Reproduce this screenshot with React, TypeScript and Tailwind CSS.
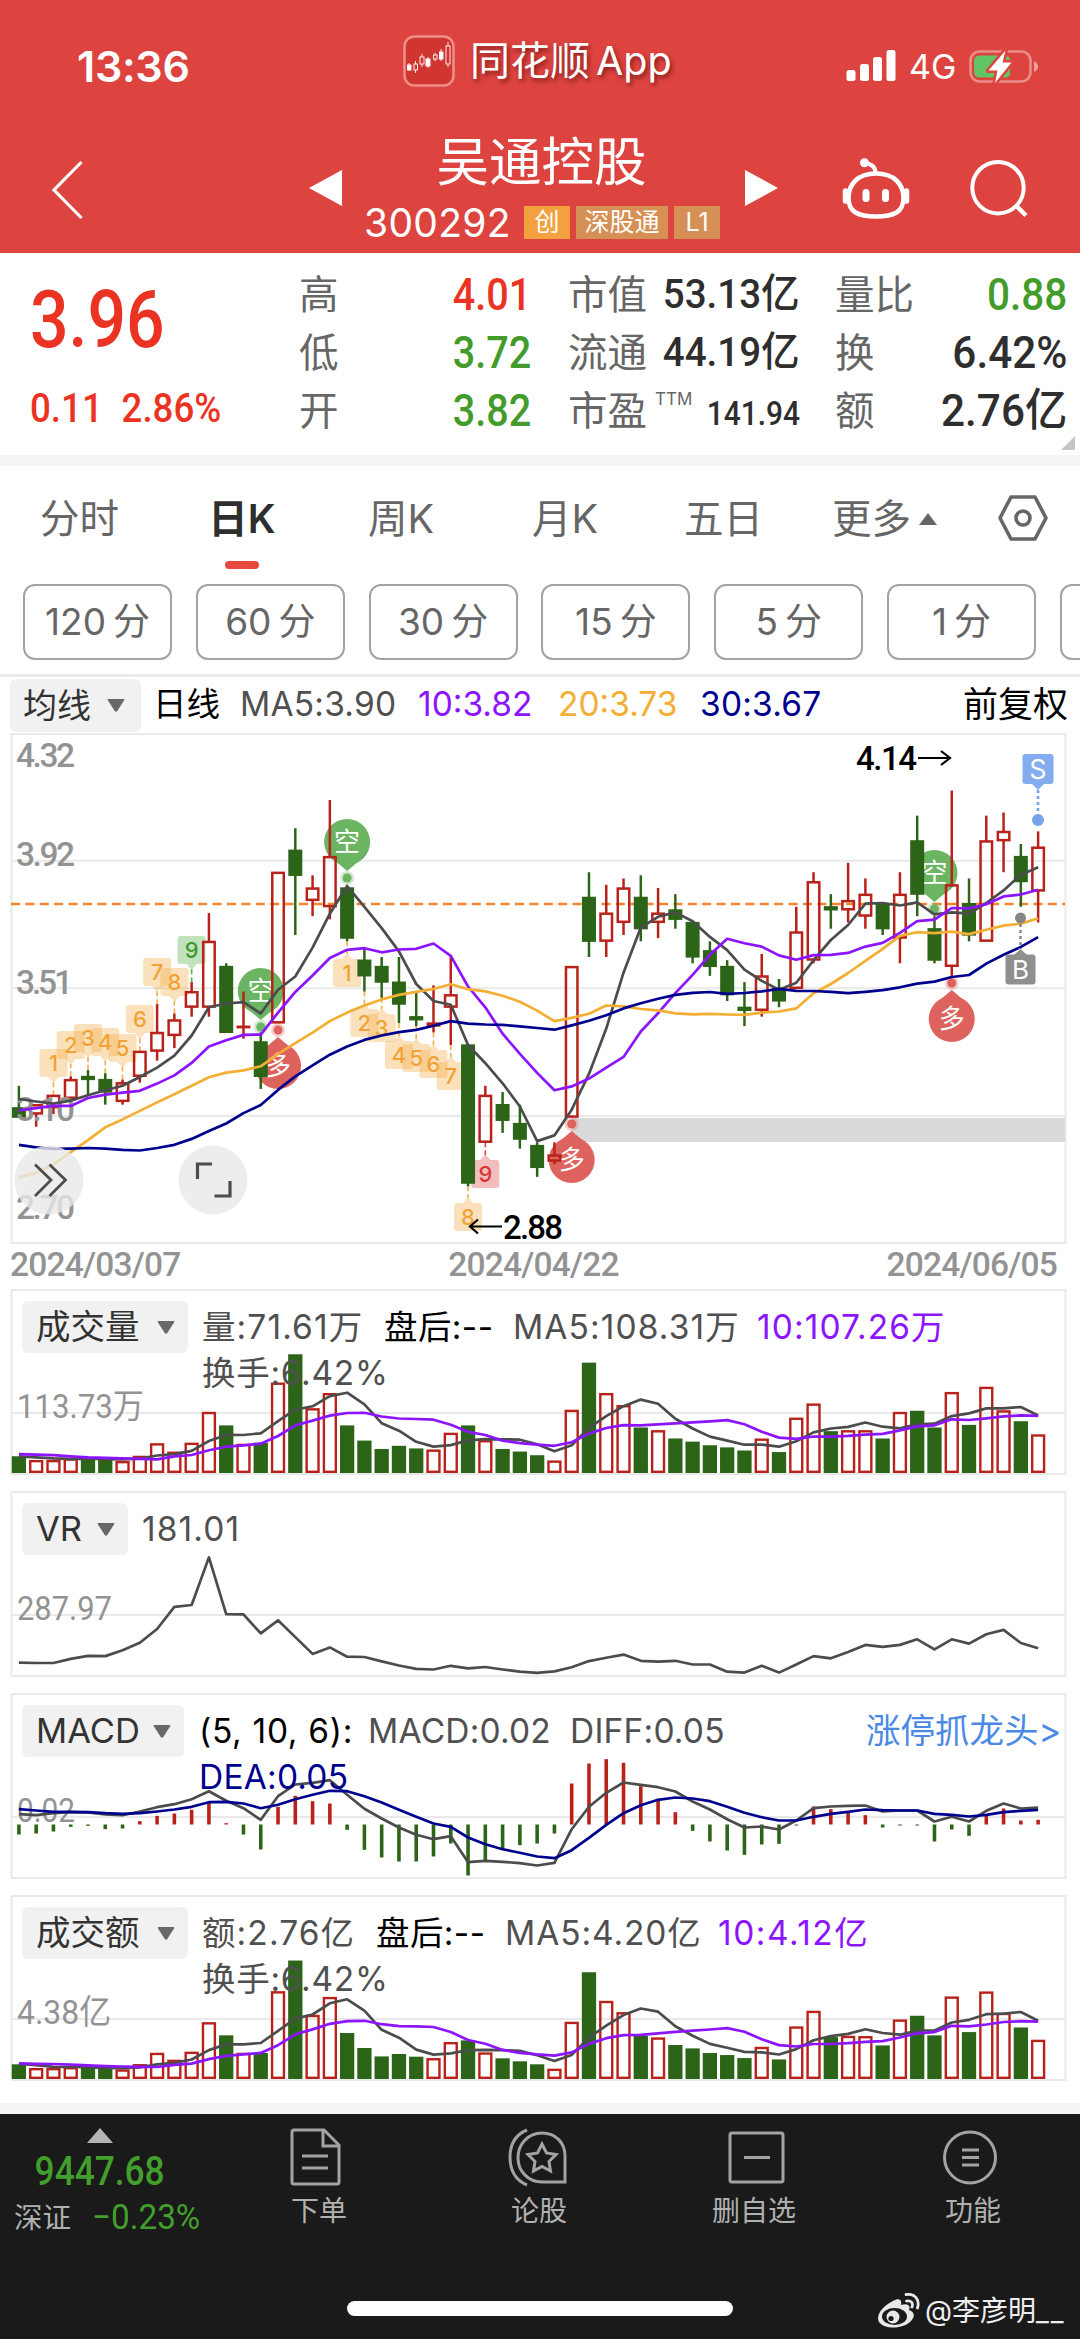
import type { ReactNode } from 'react';
import clsx from 'clsx';

// [open, close, high, low]
const candles = [
  [3.13, 3.10, 3.20, 3.10], [3.11, 3.14, 3.14, 3.07], [3.13, 3.17, 3.17, 3.11], [3.16, 3.22, 3.23, 3.16],
  [3.23, 3.22, 3.25, 3.17], [3.22, 3.18, 3.24, 3.14], [3.15, 3.21, 3.22, 3.14], [3.23, 3.31, 3.31, 3.21],
  [3.31, 3.37, 3.46, 3.28], [3.36, 3.41, 3.43, 3.32], [3.45, 3.50, 3.53, 3.42], [3.45, 3.66, 3.75, 3.42],
  [3.58, 3.37, 3.59, 3.37], [3.39, 3.39, 3.50, 3.35], [3.34, 3.23, 3.37, 3.19], [3.40, 3.88, 3.88, 3.40],
  [3.95, 3.87, 4.02, 3.68], [3.79, 3.83, 3.87, 3.74], [3.77, 3.93, 4.11, 3.73], [3.83, 3.67, 3.83, 3.66],
  [3.60, 3.55, 3.64, 3.50], [3.58, 3.53, 3.61, 3.48], [3.53, 3.46, 3.61, 3.40], [3.42, 3.41, 3.50, 3.39],
  [3.39, 3.40, 3.52, 3.37], [3.45, 3.49, 3.61, 3.33], [3.33, 2.89, 3.33, 2.88], [3.02, 3.17, 3.20, 3.02],
  [3.14, 3.09, 3.18, 3.05], [3.08, 3.03, 3.14, 3.00], [3.01, 2.94, 3.02, 2.91], [2.96, 2.98, 3.02, 2.95],
  [3.10, 3.58, 3.58, 3.10], [3.80, 3.66, 3.88, 3.61], [3.66, 3.75, 3.84, 3.61], [3.72, 3.83, 3.86, 3.68],
  [3.80, 3.70, 3.87, 3.66], [3.72, 3.75, 3.83, 3.67], [3.76, 3.73, 3.81, 3.70], [3.72, 3.61, 3.72, 3.59],
  [3.63, 3.58, 3.66, 3.55], [3.58, 3.49, 3.60, 3.47], [3.45, 3.44, 3.53, 3.39], [3.44, 3.55, 3.62, 3.42],
  [3.51, 3.47, 3.54, 3.45], [3.51, 3.69, 3.77, 3.51], [3.60, 3.85, 3.88, 3.59], [3.77, 3.76, 3.81, 3.70],
  [3.76, 3.79, 3.91, 3.72], [3.74, 3.81, 3.86, 3.70], [3.78, 3.70, 3.78, 3.68], [3.67, 3.81, 3.88, 3.59],
  [3.98, 3.81, 4.06, 3.74], [3.70, 3.60, 3.74, 3.59], [3.58, 3.84, 4.14, 3.55], [3.78, 3.68, 3.86, 3.66],
  [3.66, 3.98, 4.06, 3.66], [3.98, 4.01, 4.07, 3.88], [3.93, 3.85, 3.97, 3.77], [3.82, 3.96, 4.01, 3.72],
];

const volumes = [
  32, 25, 25, 28, 27, 27, 23, 33, 57, 41, 58, 117, 91, 56, 58, 173, 227, 124, 153, 91,
  62, 46, 52, 47, 45, 77, 91, 63, 46, 41, 34, 24, 121, 211, 153, 130, 87, 82, 66, 60,
  53, 49, 43, 66, 40, 106, 133, 80, 82, 82, 66, 117, 119, 87, 155, 92, 165, 120, 99, 74,
];

const amounts = [
  1.08, 0.81, 0.81, 0.88, 0.81, 0.81, 0.71, 1.10, 1.93, 1.42, 2.01, 4.18, 3.21, 1.93, 1.91, 6.46, 8.71, 4.72, 6.04, 3.38,
  2.28, 1.66, 1.84, 1.64, 1.54, 2.72, 2.84, 1.96, 1.52, 1.30, 1.08, 0.76, 4.21, 7.85, 5.75, 4.92, 3.18, 3.06, 2.50, 2.25,
  1.91, 1.76, 1.54, 2.37, 1.44, 3.87, 5.02, 3.08, 3.18, 3.16, 2.47, 4.38, 4.65, 3.21, 6.07, 3.45, 6.44, 4.87, 3.79, 2.89,
];

const vr = [
  135, 134, 134, 147, 157, 156, 175, 199, 243, 314, 320, 473, 291, 290, 229, 271, 217, 163, 184, 154,
  153, 139, 126, 115, 113, 125, 117, 121, 113, 106, 102, 107, 120, 140, 151, 161, 141, 138, 141, 129,
  129, 106, 103, 125, 103, 129, 156, 149, 169, 192, 186, 192, 210, 178, 210, 196, 226, 240, 198, 181,
];

// thousandths
const macd = [
  -30, -27, -21, -7, -4, -14, -12, 10, 26, 33, 44, 68, 4, -30, -75, 53, 86, 70, 63, -16,
  -76, -99, -111, -111, -96, -57, -153, -107, -76, -62, -57, -27, 123, 183, 196, 185, 115, 77, 37, -19,
  -51, -78, -91, -60, -58, -3, 54, 46, 35, 28, -9, -3, -3, -51, -15, -34, 30, 48, 12, 14,
];
const diff = [
  31, 28, 34, 37, 36, 30, 28, 39, 52, 61, 76, 100, 71, 49, 14, 85, 120, 125, 133, 89,
  47, 18, -9, -31, -44, -35, -113, -109, -112, -116, -123, -115, -14, 53, 95, 126, 119, 112, 99, 69,
  45, 16, -9, -6, -15, 12, 49, 54, 56, 57, 39, 42, 42, 9, 23, 9, 41, 63, 48, 51,
];
const dea = [
  46, 42, 38, 38, 37, 34, 32, 34, 39, 45, 53, 67, 68, 63, 49, 59, 76, 89, 101, 100,
  85, 66, 44, 23, 3, -7, -39, -59, -74, -85, -96, -101, -77, -40, -1, 34, 58, 74, 81, 78,
  70, 53, 35, 22, 12, 12, 23, 32, 38, 45, 43, 42, 42, 32, 29, 24, 29, 37, 41, 44,
];

const RED = '#b8221a';
const GREEN = '#2c6518';
const GRAY = '#4c4c4c';
const PURPLE = '#8c14ff';
const ORANGE = '#f3ae34';
const NAVY = '#00008f';
const GRID = '#e9e9e9';

const FONT = "font-[Inter,'Noto_Sans_CJK_SC',sans-serif]";
const DIN = "font-[Roboto,'Noto_Sans_CJK_SC',sans-serif]";

const cx = (i: number) => 18.9 + i * 17.275;
const isUp = (i: number) => candles[i][1] >= candles[i][0];

// The first values come from bars that lie before the visible window
function average(values: number[], n: number, lead: number[]) {
  return values.map((_, i) =>
    i < lead.length ? lead[i] : values.slice(i - n + 1, i + 1).reduce((a, b) => a + b, 0) / n
  );
}

const closes = candles.map((c) => c[1]);
const ma5 = average(closes, 5, [3.158, 3.15, 3.143, 3.153]);
const ma10 = average(closes, 10, [3.122, 3.129, 3.136, 3.136, 3.161, 3.172, 3.178, 3.184, 3.207]);
const ma20 = average(closes, 20, [
  2.909, 2.923, 2.95, 2.989, 3.027, 3.068, 3.093, 3.12, 3.147, 3.173, 3.2, 3.227, 3.242, 3.249, 3.262, 3.302, 3.336, 3.369, 3.406,
]);
const ma30 = average(closes, 30, [
  3.012, 3.004, 2.999, 3.0, 3.002, 3.0, 2.996, 2.994, 3.002, 3.012, 3.031, 3.056, 3.08, 3.113, 3.139, 3.187, 3.23, 3.265,
  3.299, 3.325, 3.346, 3.36, 3.371, 3.378, 3.391, 3.406, 3.398, 3.395, 3.394,
]);

function Line({ values, y, color }: { values: number[]; y: (v: number) => number; color: string }) {
  return (
    <polyline
      points={values.map((v, i) => `${cx(i)},${y(v).toFixed(1)}`).join(' ')}
      fill="none"
      stroke={color}
      strokeWidth={2.7}
      strokeLinejoin="round"
    />
  );
}

const priceY = (p: number) => 2 + (4.32 - p) * 314.1;

// [bar index, label, top of the box]
const tagsAbove: [number, string, number][] = [
  [2, '1', 317], [3, '2', 299], [4, '3', 292], [5, '4', 296], [6, '5', 302], [7, '6', 273], [8, '7', 226], [9, '8', 236], [10, '9', 204],
];
const tagsBelow: [number, string, number][] = [
  [19, '1', 227], [20, '2', 277], [21, '3', 282], [22, '4', 309], [23, '5', 312], [24, '6', 318], [25, '7', 330], [27, '9', 428], [26, '8', 471],
];

function CountTag({ i, label, top, below }: { i: number; label: string; top: number; below?: boolean }) {
  const x = cx(i);
  const nine = label === '9';
  const fill = !nine ? '#f3ad45' : below ? '#dd4a4a' : '#56b04c';
  const text = !nine ? '#f2a235' : below ? '#dc3535' : '#3b9a2b';
  const pointer = below
    ? `M${x - 5} ${top} L${x} ${top - 6} L${x + 5} ${top}Z`
    : `M${x - 5} ${top + 28} L${x} ${top + 34} L${x + 5} ${top + 28}Z`;
  return (
    <g>
      <g fill={fill} opacity={0.36}>
        <rect x={x - 14} y={top} width={28} height={28} rx={3} />
        <path d={pointer} />
      </g>
      <line
        x1={x}
        x2={x}
        y1={below ? priceY(candles[i][3]) : priceY(candles[i][2])}
        y2={below ? top - 5 : top + 33}
        stroke={fill}
        strokeWidth={1.6}
        strokeDasharray="5 3"
      />
      <text x={x} y={top + 22} textAnchor="middle" fontSize={22} fontWeight={500} fill={text}>{label}</text>
    </g>
  );
}

function Balloon({ i, y, long }: { i: number; y: number; long?: boolean }) {
  const x = cx(i);
  const s = long ? -1 : 1;
  const fill = long ? '#de625d' : '#6bb462';
  return (
    <g>
      <circle cx={x} cy={y + s * 36} r={7} fill={fill} opacity={0.3} />
      <circle cx={x} cy={y + s * 36} r={4.5} fill={fill} />
      <circle cx={x} cy={y} r={23} fill={fill} />
      <path d={`M${x - 13} ${y + s * 18} L${x} ${y + s * 29} L${x + 13} ${y + s * 18}Z`} fill={fill} />
      <text x={x} y={y + 9} textAnchor="middle" fontSize={26} fill="#fff">{long ? '多' : '空'}</text>
    </g>
  );
}

function PriceChart() {
  return (
    <svg width={1080} height={512} viewBox="0 0 1080 512" className={clsx('block overflow-visible', FONT)}>
      <rect x={11.5} y={2} width={1054} height={509} fill="none" stroke={GRID} strokeWidth={2} />
      {[128.7, 256.3, 383.9].map((y) => (
        <line key={y} x1={12} x2={1065} y1={y} y2={y} stroke={GRID} strokeWidth={2} />
      ))}
      <rect x={572} y={386} width={493} height={24} fill="#dadada" />
      <line x1={11} x2={1065} y1={172} y2={172} stroke="#f5842c" strokeWidth={2.4} strokeDasharray="9 5.4" />

      {tagsAbove.map(([i, label, top]) => <CountTag key={i} i={i} label={label} top={top} />)}
      {tagsBelow.map(([i, label, top]) => <CountTag key={i} i={i} label={label} top={top} below />)}

      <Balloon i={14} y={259} />
      <Balloon i={19} y={110} />
      <Balloon i={53} y={141} />
      <Balloon i={15} y={334} long />
      <Balloon i={32} y={428} long />
      <Balloon i={54} y={287} long />

      {candles.map(([open, close, high, low], i) => {
        const top = priceY(Math.max(open, close)) - 0.6;
        const bottom = priceY(Math.min(open, close)) + 0.6;
        const color = isUp(i) ? RED : GREEN;
        const x = cx(i);
        return (
          <g key={i} stroke={color} strokeWidth={2.5}>
            <line x1={x} x2={x} y1={priceY(high)} y2={top + 1} />
            <line x1={x} x2={x} y1={bottom - 1} y2={priceY(low)} />
            <rect
              x={x - 5.75}
              y={top + 1.25}
              width={11.5}
              height={Math.max(0.4, bottom - top - 2.5)}
              fill={isUp(i) ? 'none' : GREEN}
            />
          </g>
        );
      })}

      <g className={DIN} fontSize={33.5} fontWeight={500} fill="#939393">
        <text x={16} y={35} textLength={59}>4.32</text>
        <text x={16} y={134} textLength={59}>3.92</text>
        <text x={16} y={262} textLength={57}>3.51</text>
        <text x={16} y={389} textLength={59}>3.10</text>
        <text x={16} y={487} textLength={59}>2.70</text>
      </g>

      <Line values={ma5} y={priceY} color={GRAY} />
      <Line values={ma10} y={priceY} color={PURPLE} />
      <Line values={ma20} y={priceY} color={ORANGE} />
      <Line values={ma30} y={priceY} color={NAVY} />

      {/* highest and lowest price */}
      <g className={DIN} fontSize={33} fontWeight={500} fill="#000">
        <text x={856} y={38} textLength={61}>4.14</text>
        <text x={503} y={507} textLength={60}>2.88</text>
      </g>
      <g fill="none" stroke="#000" strokeWidth={2.2}>
        <path d="M918 26H950M941 19L950 26L941 33" />
        <path d="M502 494.5H470M478 487.5L470 494.5L478 501.5" />
      </g>

      {/* own trades */}
      <g fill="#84adf0">
        <rect x={1022.5} y={22} width={31} height={30} rx={3} />
        <path d="M1032 52L1038 58L1044 52Z" />
        <line x1={1038} x2={1038} y1={58} y2={80} stroke="#75a3ee" strokeWidth={2.6} strokeDasharray="3 3" />
        <circle cx={1038} cy={88} r={6} fill="#75a3ee" />
        <text x={1038} y={47} textAnchor="middle" fontSize={27} fill="#fff">S</text>
      </g>
      <g fill="#8f8f8f">
        <circle cx={1020.5} cy={186} r={5.5} fill="#858585" />
        <line x1={1020.5} x2={1020.5} y1={192} y2={217} stroke="#858585" strokeWidth={2.4} strokeDasharray="3 3" />
        <path d="M1014 223L1020.5 217L1027 223Z" />
        <rect x={1005.5} y={222.5} width={30} height={30} rx={3} />
        <text x={1020.5} y={246.5} textAnchor="middle" fontSize={26} fill="#fff">B</text>
      </g>

      {/* floating controls */}
      <g fill="#e8e8e8" fillOpacity={0.8}>
        <circle cx={49} cy={448} r={34.5} />
        <circle cx={213} cy={448} r={34.5} />
      </g>
      <g fill="none" stroke="#4d4d4d" strokeWidth={2.8}>
        <path d="M35 432.500L51 448L35 464M49.500 432.500L65.500 448L49.500 464" />
        <path d="M197.500 447V432H212M230 449V464H214.500" strokeWidth={3.2} />
      </g>
    </svg>
  );
}

function Bars({ values, scale, lead5, lead10 }: { values: number[]; scale: number; lead5: number[]; lead10: number[] }) {
  const y = (v: number) => 184 - v * scale;
  return (
    <>
      {values.map((v, i) => (
        <rect
          key={i}
          x={cx(i) - 5.95}
          y={y(v) + 1.2}
          width={11.9}
          height={v * scale - 2.4}
          fill={isUp(i) ? '#fff' : GREEN}
          fillOpacity={isUp(i) ? 0 : 1}
          stroke={isUp(i) ? RED : GREEN}
          strokeWidth={2.4}
        />
      ))}
      <Line values={average(values, 5, lead5)} y={y} color={GRAY} />
      <Line values={average(values, 10, lead10)} y={y} color={PURPLE} />
    </>
  );
}

function Down() {
  return (
    <svg width={18} height={13} viewBox="0 0 18 13">
      <path d="M1.500 0H16.500Q18 0 17 1.600L10.300 12Q9 13.500 7.700 12L1 1.600Q0 0 1.500 0Z" fill="#686868" />
    </svg>
  );
}

type PanelProps = {
  title: string;
  chipClass: string;
  grid: number;
  label: string;
  labelLength: number;
  chart: ReactNode;
  children: ReactNode;
};

function Panel({ title, chipClass, grid, label, labelLength, chart, children }: PanelProps) {
  return (
    <section className="relative mb-4 h-[186px] pt-[12px] pl-[22px]">
      <svg width={1080} height={186} viewBox="0 0 1080 186" className="absolute top-0 left-0">
        <rect x={11.5} y={1} width={1054} height={184} fill="none" stroke={GRID} strokeWidth={2} />
        <line x1={12} x2={1065} y1={grid} y2={grid} stroke={GRID} strokeWidth={2} />
        <text
          x={17}
          y={grid + 5}
          textLength={labelLength}
          lengthAdjust="spacingAndGlyphs"
          className={DIN}
          fontSize={34}
          fill="#939393"
        >
          {label}
        </text>
        {chart}
      </svg>
      <div className="relative flex text-[33.5px] leading-[46px] whitespace-nowrap text-[#505050]">
        <div className={clsx('flex h-[52px] shrink-0 items-center justify-between rounded-md bg-[#f1f1f1] pr-[13px] pl-[14px] text-[34.5px] text-[#333]', chipClass)}>
          {title}
          <Down />
        </div>
        <div className="grow pt-[3px]">{children}</div>
      </div>
    </section>
  );
}

function StatusBar() {
  return (
    <div className="flex h-[122px] items-start pt-[35px] pl-[77px] text-white">
      <div className="w-[326px] pt-[4px] text-[43px] leading-[54px] font-semibold tracking-[-0.3px]">13:36</div>
      <div className="flex w-[443px] items-center gap-[15px]">
        <svg width={52} height={52} viewBox="0 0 52 52">
          <rect x={1.500} y={1.500} width={49} height={49} rx={10} fill="#d0362f" stroke="#ee8f8a" strokeWidth={2.500} />
          <g fill="#fff" stroke="#fff" strokeWidth={0.900}>
            <path d="M6 28V36M12.500 26V38M19 19V32M25 22V33M32 18V26M38 14V26M45 7V32" />
            <rect x={4.500} y={30} width={3.500} height={5} />
            <rect x={11} y={29} width={3.500} height={6} fill="#d0362f" />
            <rect x={17} y={22} width={4} height={7} fill="#d0362f" />
            <rect x={23} y={24} width={4} height={7} />
            <rect x={30.500} y={20} width={3.500} height={4} fill="#d0362f" />
            <rect x={36.500} y={17} width={3.500} height={7} />
            <rect x={43} y={11} width={4} height={18} fill="#d0362f" />
          </g>
        </svg>
        <span className="text-[40px] leading-[52px] whitespace-nowrap text-shadow-[2px_3px_4px_rgba(60,0,0,0.55)]">
          同花顺<span className="pl-[6px] text-[39.5px]">App</span>
        </span>
      </div>
      <div className="flex h-[62px] items-center">
        <svg width={50} height={32} viewBox="0 0 50 32" fill="#fff">
          <rect x={0.500} y={20} width={9} height={11} rx={2.500} />
          <rect x={14} y={14} width={9} height={17} rx={2.500} />
          <rect x={27} y={7} width={9} height={24} rx={2.500} />
          <rect x={40.500} y={0} width={9} height={31} rx={2.500} />
        </svg>
        <span className="w-[73px] pl-[13px] text-[34px]">4G</span>
        <svg width={72} height={35} viewBox="0 0 72 35">
          <rect x={1.500} y={2.500} width={60} height={30} rx={9} fill="none" stroke="#fff" strokeOpacity={0.4} strokeWidth={2.600} />
          <path d="M11 6.500H36Q41 6.500 41 11V24Q41 28.500 36 28.500H11Q5 28.500 5 22.500V12.500Q5 6.500 11 6.500Z" fill="#62c462" />
          <path d="M65 12Q69 14 69 17.500Q69 21 65 23Z" fill="#fff" fillOpacity={0.5} />
          <path
            d="M36.500 1.500L19.500 21.500H28.500L26 34L42.500 13.500H33.500Z"
            fill="#fff"
            stroke="#dd433f"
            strokeWidth={5}
            paintOrder="stroke"
            strokeLinejoin="round"
          />
        </svg>
      </div>
    </div>
  );
}

function TitleBar() {
  return (
    <div className="flex h-[131px] items-start text-white">
      <div className="w-[309px] pt-[38px] pl-[52px]">
        <svg width={31} height={60} viewBox="0 0 31 60" fill="none" stroke="#fff" strokeWidth={3.200}>
          <path d="M29.500 2L2 30L29.500 58" />
        </svg>
      </div>
      <svg width={33} height={36} viewBox="0 0 33 36" className="mt-[48px]" fill="#fff">
        <path d="M33 0V36L0 18Z" />
      </svg>
      <div className="w-[403px]">
        <div className="pt-[10px] pr-[4px] text-center text-[52.5px] leading-[60px]">吴通控股</div>
        <div className="flex items-center gap-[6px] pt-[14px] pl-[22px] text-[25px] leading-[32px]">
          <span className="w-[154px] text-[39px] tracking-[0.3px]">300292</span>
          <span className="h-[33px] w-[46px] bg-[#f3a13f] text-center">创</span>
          <span className="h-[33px] w-[92px] bg-[#d68f54] text-center">深股通</span>
          <span className="h-[33px] w-[46px] bg-[#d68f54] text-center">L1</span>
        </div>
      </div>
      <svg width={33} height={36} viewBox="0 0 33 36" className="mt-[48px]" fill="#fff">
        <path d="M0 0V36L33 18Z" />
      </svg>
      <svg width={68} height={64} viewBox="0 0 68 64" className="mt-[36px] ml-[64px]" fill="none" stroke="#fff">
        <path d="M34 15.500C52 15.500 61.500 26 61.500 40C61.500 54 52 58.500 34 58.500C16 58.500 6.500 54 6.500 40C6.500 26 16 15.500 34 15.500Z" strokeWidth={4.500} />
        <path d="M33.500 15C33.500 9 30 6 23 5" strokeWidth={4} />
        <circle cx={22.500} cy={4.700} r={4.500} fill="#fff" stroke="none" />
        <path d="M3.500 33V43M64.500 33V43" strokeWidth={5.500} strokeLinecap="round" />
        <path d="M24 34.500V40.500M43.500 34.500V40.500" strokeWidth={7} strokeLinecap="round" />
      </svg>
      <svg width={60} height={60} viewBox="0 0 60 60" className="mt-[37px] ml-[59px]" fill="none" stroke="#fff" strokeWidth={4}>
        <circle cx={29} cy={28.700} r={25.700} />
        <path d="M46.500 46L57 56.500" strokeWidth={4.500} />
      </svg>
    </div>
  );
}

function Quote({ label, value, className, labelClass = 'w-[96px]' }: { label: ReactNode; value: string; className: string; labelClass?: string }) {
  return (
    <div className="flex h-[58px] items-center justify-between whitespace-nowrap">
      <span className={clsx('pt-[2px] text-[39.5px] text-[#666]', labelClass)}>{label}</span>
      <span className={clsx('origin-right font-medium', DIN, className)}>{value}</span>
    </div>
  );
}

function Summary() {
  return (
    <div className="relative flex h-[202px] pt-[13px]">
      <div className={clsx('w-[299px] pl-[30px] font-medium text-[#eb3323]', DIN)}>
        <div className="h-[111px] origin-left scale-x-[0.86] pt-[10px] text-[79px] leading-[88px]">3.96</div>
        <div className="flex origin-left scale-x-[0.895] gap-[21px] text-[41px] leading-[62px]">
          <span>0.11</span>
          <span>2.86%</span>
        </div>
      </div>
      <div className="w-[232px]">
        <Quote label="高" value="4.01" className="scale-x-[0.88] text-[45px] text-[#eb3323]" />
        <Quote label="低" value="3.72" className="scale-x-[0.88] text-[45px] text-[#439b2b]" />
        <Quote label="开" value="3.82" className="scale-x-[0.88] text-[45px] text-[#439b2b]" />
      </div>
      <div className="ml-[37px] w-[232px]">
        <Quote label="市值" value="53.13亿" className="scale-x-[0.94] text-[41px] text-[#2e2e2e]" />
        <Quote label="流通" value="44.19亿" className="scale-x-[0.94] text-[41px] text-[#2e2e2e]" />
        <Quote
          label={<>市盈<sup className="-top-[20px] pl-[8px] text-[17px]">TTM</sup></>}
          value="141.94"
          labelClass="w-[130px]"
          className="scale-x-[0.88] pt-[4px] text-[34px] text-[#2e2e2e]"
        />
      </div>
      <div className="ml-[35px] w-[232px]">
        <Quote label="量比" value="0.88" className="scale-x-[0.9] text-[45px] text-[#439b2b]" />
        <Quote label="换" value="6.42%" className="scale-x-[0.94] text-[45px] text-[#2e2e2e]" />
        <Quote label="额" value="2.76亿" className="scale-x-[0.94] text-[45px] text-[#2e2e2e]" />
      </div>
      <svg width={14} height={14} className="absolute right-[5px] bottom-[5px]">
        <path d="M14 0V14H0Z" fill="#c4c4c4" />
      </svg>
    </div>
  );
}

function Tabs() {
  return (
    <div className="flex h-[118px] pt-[26px] pl-[40px] text-[39.5px] leading-[54px] whitespace-nowrap text-[#666]">
      <span className="w-[170px]">分时</span>
      <span className="w-[158px]">
        <span className="flex w-[64px] flex-col items-center font-semibold text-[#2e2e2e]">
          日K
          <i className="mt-[15px] h-[8px] w-[34px] rounded-full bg-[#e8493e]" />
        </span>
      </span>
      <span className="w-[164px]">周K</span>
      <span className="w-[152px]">月K</span>
      <span className="w-[148px]">五日</span>
      <span className="flex w-[166px] items-start">
        更多
        <svg width={18} height={12} className="mt-[21px] ml-[8px]">
          <path d="M9 0L18 12H0Z" fill="#666" />
        </svg>
      </span>
      <svg width={50} height={46} viewBox="0 0 50 46" className="mt-[3px]" fill="none" stroke="#666" strokeWidth={3.600}>
        <path d="M13 2H37L48 23L37 44H13L2 23Z" strokeLinejoin="round" />
        <circle cx={25} cy={23} r={7} />
      </svg>
    </div>
  );
}

function Periods() {
  return (
    <div className="flex gap-[23.8px] overflow-hidden pl-[23px]">
      {['120', '60', '30', '15', '5', '1', ''].map((n) => (
        <div key={n} className="flex h-[76px] w-[149px] shrink-0 items-center justify-center gap-[7px] rounded-[12px] border-2 border-[#a2a2a2] text-[37px] text-[#666]">
          {n && <><span>{n}</span><span>分</span></>}
        </div>
      ))}
    </div>
  );
}

function Legend() {
  return (
    <div className="mt-[14px] flex h-[58px] items-start border-t-[3px] border-[#ececec] pt-[2px] pl-[10px] text-[33.5px] leading-[50px] whitespace-nowrap">
      <div className="mr-[12px] flex h-[53px] w-[131px] items-center justify-between rounded-md bg-[#f1f1f1] pr-[16px] pl-[13px] text-[34px] text-[#333]">
        均线
        <Down />
      </div>
      <span className="w-[87px] text-black">日线</span>
      <span className="w-[178px] tracking-[0.2px] text-[#505050]">MA5:3.90</span>
      <span className="w-[140px] text-[#8c14ff]">10:3.82</span>
      <span className="w-[142px] text-[#f3ae34]">20:3.73</span>
      <span className="w-[263px] tracking-[0.2px] text-[#00008f]">30:3.67</span>
      <span className="text-[35px] text-black">前复权</span>
    </div>
  );
}

function BottomBar() {
  const items = [
    {
      label: '下单',
      width: 'w-[238px]',
      iconClass: 'mr-[6px]',
      icon: (
        <>
          <path d="M6 2H36L51 17V54Q51 56 49 56H6Q4 56 4 54V4Q4 2 6 2Z" />
          <path d="M35 2V18H51M14 28H40M14 40H40" />
        </>
      ),
    },
    {
      label: '论股',
      width: 'w-[202px]',
      iconClass: 'mr-[4px]',
      icon: (
        <>
          <path d="M33 5C47 5 56 15 56 28V54H33C19 54 9 43 9 30C9 16 19 5 33 5Z" />
          <path d="M18 2C6 7 1 17 1 29C1 41 6 52 18 57" />
          <path d="M33 16L37.500 25L47 26.500L40 33.500L41.500 43L33 38.500L24.500 43L26 33.500L19 26.500L28.500 25Z" />
        </>
      ),
    },
    {
      label: '删自选',
      width: 'w-[228px]',
      iconClass: 'ml-[6px]',
      icon: <><rect x={1} y={5} width={53} height={49} rx={2} /><path d="M15 29.500H41" /></>,
    },
    {
      label: '功能',
      width: 'w-[210px]',
      iconClass: 'mr-[2px]',
      icon: <><circle cx={26} cy={29.500} r={25.500} /><path d="M18 22H35M18 29.500H35M18 37H35" /></>,
    },
  ];
  return (
    <nav className="h-[225px] bg-[#1a1a1a] text-[#b0b0b0]">
      <div className="flex h-[187px] pt-[14px]">
        <div className="flex w-[200px] flex-col items-center">
          <svg width={26} height={15}><path d="M13 0L26 15H0Z" fill="#b5b5b5" /></svg>
          <div className={clsx('scale-x-[0.86] pt-[1px] text-[41px] leading-[54px] font-medium text-[#439f2b]', DIN)}>9447.68</div>
          <div className="flex w-full items-center pl-[14px] text-[28.5px] leading-[40px] whitespace-nowrap">
            深证
            <span className={clsx('ml-[21px] origin-left scale-x-[0.95] text-[35px] text-[#439f2b]', DIN)}>−0.23%</span>
          </div>
        </div>
        <div className="flex grow">
          {items.map((item) => (
            <div key={item.label} className={clsx('flex flex-col items-center', item.width)}>
              <svg width={60} height={60} viewBox="-2 0 60 60" fill="none" stroke="#a3a3a3" strokeWidth={3} className={item.iconClass}>
                {item.icon}
              </svg>
              <span className="pt-[3px] text-[28px] leading-[40px]">{item.label}</span>
            </div>
          ))}
        </div>
      </div>
      <div className="flex h-[38px] pl-[347px]">
        <div className="h-[15px] w-[386px] rounded-full bg-white" />
        <div className="-mt-[8px] ml-[144px] flex h-[36px] items-center text-[28px] whitespace-nowrap text-[#eee]">
          <svg width={44} height={36} viewBox="0 0 44 36" className="mr-[4px]">
            <path d="M16 8C23 4 25 8 24 12C31 10 34 13 32 17C38 19 38 24 34 28C27 36 8 37 2 29C-2 22 7 12 16 8Z" fill="#e8e8e8" />
            <ellipse cx={17.500} cy={23.500} rx={12.500} ry={8.500} fill="#1a1a1a" />
            <circle cx={16} cy={24} r={6.500} fill="#e8e8e8" />
            <circle cx={14} cy={25.500} r={2.600} fill="#1a1a1a" />
            <path d="M29 1.500C38 0 43 7 40.500 15M29.500 8C34 7 36.500 10 35 14" fill="none" stroke="#e8e8e8" strokeWidth={2.800} strokeLinecap="round" />
          </svg>
          @李彦明<span className="tracking-[2px]">__</span>
        </div>
      </div>
    </nav>
  );
}

export default function App() {
  return (
    <div className={clsx('h-[2339px] w-[1080px] overflow-hidden bg-white', FONT)}>
      <header className="h-[253px] bg-[#dd433f]">
        <StatusBar />
        <TitleBar />
      </header>
      <Summary />
      <div className="h-[11px] bg-[#f4f4f4]" />
      <Tabs />
      <Periods />
      <Legend />
      <PriceChart />
      <div className={clsx('flex h-[45px] justify-between pr-[23px] pl-[10px] text-[33.5px] leading-[41px] font-medium tracking-[-0.8px] text-[#939393]', DIN)}>
        <span>2024/03/07</span>
        <span>2024/04/22</span>
        <span>2024/06/05</span>
      </div>

      <Panel
        title="成交量"
        chipClass="w-[166px]"
        grid={124}
        label="113.73万"
        labelLength={127}
        chart={<Bars values={volumes} scale={0.523} lead5={[32, 30, 28, 27]} lead10={[36, 35, 34, 32, 30, 29, 28, 27, 26]} />}
      >
        <div className="flex pl-[14px] tracking-[1.1px]">
          <span className="w-[182px]">量:71.61万</span>
          <span className="w-[129px] tracking-[0.4px] text-black">盘后:--</span>
          <span className="w-[244px]">MA5:108.31万</span>
          <span className="text-[#8c14ff]">10:107.26万</span>
        </div>
        <div className="pl-[14px] tracking-[0.7px]">换手:6.42%</div>
      </Panel>

      <Panel
        title="VR"
        chipClass="w-[106px]"
        grid={124}
        label="287.97"
        labelLength={95}
        chart={<Line values={vr} y={(v) => 124 - (v - 287.97) * 0.3115} color={GRAY} />}
      >
        <div className="pl-[14px] tracking-[1.1px]">181.01</div>
      </Panel>

      <Panel
        title="MACD"
        chipClass="w-[162px]"
        grid={124}
        label="0.02"
        labelLength={58}
        chart={
          <>
            {macd.map((v, i) => (
              <line key={i} x1={cx(i)} x2={cx(i)} y1={131.500} y2={131.500 - v / 3} stroke={v > 0 ? RED : GREEN} strokeWidth={3.600} />
            ))}
            <Line values={diff} y={(v) => 131.5 - v / 3} color={GRAY} />
            <Line values={dea} y={(v) => 131.5 - v / 3} color={NAVY} />
          </>
        }
      >
        <div className="flex pl-[15px]">
          <span className="w-[169px] tracking-[0.7px] text-black">(5, 10, 6):</span>
          <span className="w-[202px] tracking-[0.2px]">MACD:0.02</span>
          <span className="w-[296px] tracking-[0.2px]">DIFF:0.05</span>
          <span className="text-[34.5px] text-[#4b89e6]">涨停抓龙头&gt;</span>
        </div>
        <div className="pl-[15px] tracking-[0.2px] text-[#00008f]">DEA:0.05</div>
      </Panel>

      <Panel
        title="成交额"
        chipClass="w-[166px]"
        grid={124}
        label="4.38亿"
        labelLength={94}
        chart={<Bars values={amounts} scale={13.6} lead5={[1.1, 1.02, 0.9, 0.88]} lead10={[1.15, 1.12, 1.1, 1.05, 1.0, 0.95, 0.92, 0.9, 0.88]} />}
      >
        <div className="flex pl-[14px] tracking-[1.1px]">
          <span className="w-[174px]">额:2.76亿</span>
          <span className="w-[129px] tracking-[0.4px] text-black">盘后:--</span>
          <span className="w-[213px] tracking-[0.9px]">MA5:4.20亿</span>
          <span className="tracking-[1.5px] text-[#8c14ff]">10:4.12亿</span>
        </div>
        <div className="pl-[14px] tracking-[0.7px]">换手:6.42%</div>
      </Panel>

      <div className="mt-[22px] h-[11px] bg-[#f4f4f4]" />
      <BottomBar />
    </div>
  );
}
